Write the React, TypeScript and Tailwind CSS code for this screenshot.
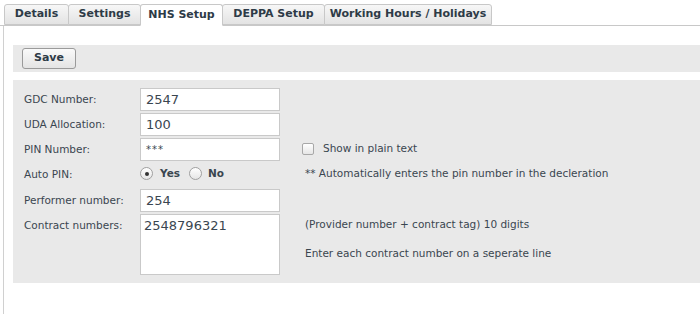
import React from "react";

const font = { fontFamily: '"DejaVu Sans", Verdana, sans-serif' };

function Tab({ label, active, w }: { label: string; active?: boolean; w: string }) {
  return (
    <div
      className={
        "h-[21px] flex items-center justify-center border border-[#c8c8c8] rounded-t-[3px] text-[11px] font-bold text-[#2e3b47] -mr-px " +
        w +
        (active
          ? " bg-white border-b-white relative z-10 h-[22px] mb-[-1px]"
          : " bg-gradient-to-b from-[#f7f7f7] to-[#e3e3e3]")
      }
    >
      {label}
    </div>
  );
}

function Row({ label, children, right, h = "h-[25px]" }: { label: string; children: React.ReactNode; right?: React.ReactNode; h?: string }) {
  return (
    <div className={"flex items-start " + h}>
      <div className="w-[127px] pl-[11px] pt-[4px] text-[10.5px] text-[#3a4650]">{label}</div>
      <div className="w-[140px]">{children}</div>
      <div className="pl-[25px] pt-[4px] text-[10.5px] text-[#3a4650]">{right}</div>
    </div>
  );
}

function Input({ value, small }: { value: string; small?: boolean }) {
  return (
    <div
      className={
        "h-[23px] w-[140px] bg-white border border-[#c9c9c9] px-[5px] flex items-center text-[#3a4650] " +
        (small ? "text-[10px] tracking-[1px]" : "text-[13px]")
      }
    >
      {value}
    </div>
  );
}

export default function App() {
  return (
    <div className="w-[700px] h-[314px] bg-white overflow-hidden" style={font}>
      <div className="pt-[4px] pl-[4px] flex items-end border-b border-[#c8c8c8] h-[26px]">
        <Tab label="Details" w="w-[65px]" />
        <Tab label="Settings" w="w-[73px]" />
        <Tab label="NHS Setup" w="w-[83px]" active />
        <Tab label="DEPPA Setup" w="w-[103px]" />
        <Tab label="Working Hours / Holidays" w="w-[168px]" />
      </div>
      <div className="ml-[3px] border-l border-[#d0d0d0] h-[288px] pl-[9px] pt-[19px]">
        <div className="bg-[#e9e9e9] h-[27px] flex items-center pl-[9px]">
          <div className="w-[54px] h-[21px] rounded-[3px] border border-[#9a9a9a] bg-gradient-to-b from-[#fafafa] to-[#e4e4e4] flex items-center justify-center text-[11px] font-bold text-[#2e3b47]">
            Save
          </div>
        </div>
        <div className="mt-[8px] bg-[#e9e9e9] h-[203px] pt-[8px]">
          <Row label="GDC Number:">
            <Input value="2547" />
          </Row>
          <Row label="UDA Allocation:">
            <Input value="100" />
          </Row>
          <Row
            label="PIN Number:"
            right={
              <div className="flex items-center -mt-[1px] -ml-[3px]">
                <div className="w-[12px] h-[12px] border border-[#a8a8a8] rounded-[2px] bg-gradient-to-b from-white to-[#e6e6e6]" />
                <span className="ml-[9px]">Show in plain text</span>
              </div>
            }
          >
            <Input value="***" small />
          </Row>
          <Row
            label="Auto PIN:"
            h="h-[26px]"
            right={<div className="-mt-[1px]">** Automatically enters the pin number in the decleration</div>}
          >
            <div className="flex items-center pt-[3px] text-[10.5px] font-bold text-[#3a4650]">
              <div className="w-[13px] h-[13px] rounded-full border border-[#a0a0a0] bg-gradient-to-b from-white to-[#e6e6e6] flex items-center justify-center">
                <div className="w-[4px] h-[4px] rounded-full bg-[#333]" />
              </div>
              <span className="ml-[7px]">Yes</span>
              <div className="ml-[9px] w-[13px] h-[13px] rounded-full border border-[#a0a0a0] bg-gradient-to-b from-white to-[#e6e6e6]" />
              <span className="ml-[6px]">No</span>
            </div>
          </Row>
          <Row label="Performer number:">
            <Input value="254" />
          </Row>
          <Row
            label="Contract numbers:"
            h="h-[62px]"
            right={
              <div className="leading-[13px]">
                <div>(Provider number + contract tag) 10 digits</div>
                <div className="mt-[16px]">Enter each contract number on a seperate line</div>
              </div>
            }
          >
            <div className="h-[61px] w-[140px] bg-white border border-[#c9c9c9] px-[3px] pt-[1px] text-[13px] text-[#3a4650]">
              2548796321
            </div>
          </Row>
        </div>
      </div>
    </div>
  );
}
